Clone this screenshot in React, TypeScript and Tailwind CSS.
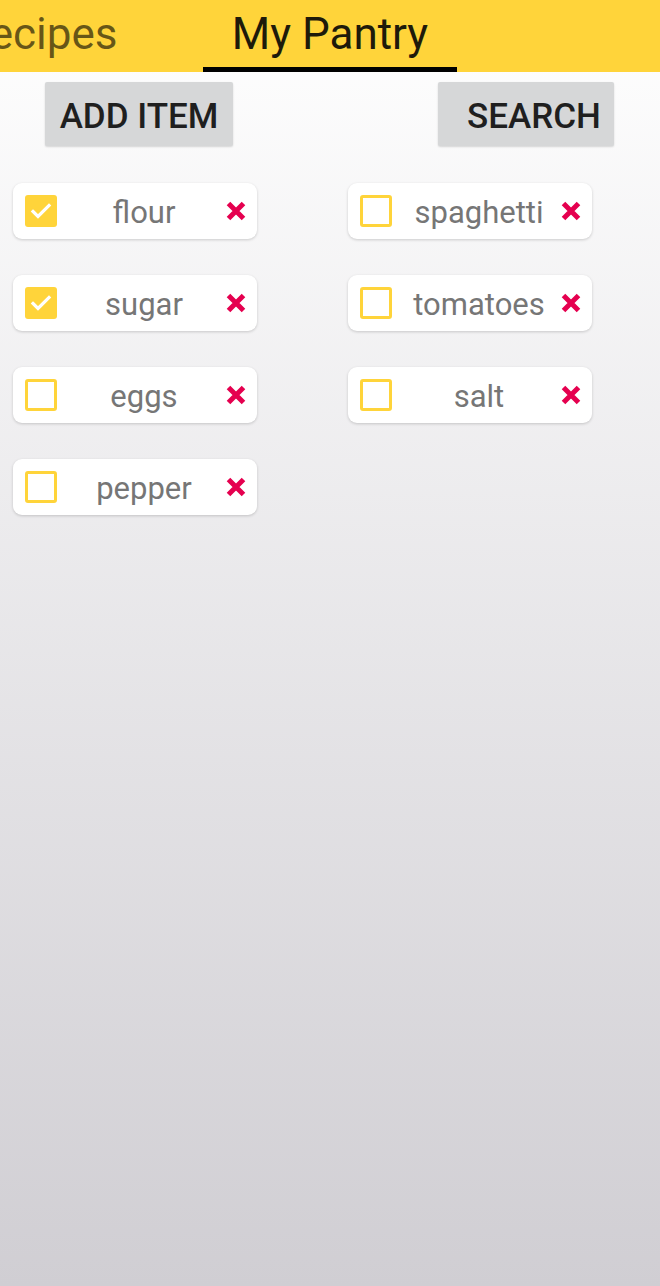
import React from "react";

type Item = { name: string; checked: boolean };

const left: Item[] = [
  { name: "flour", checked: true },
  { name: "sugar", checked: true },
  { name: "eggs", checked: false },
  { name: "pepper", checked: false },
];

const right: Item[] = [
  { name: "spaghetti", checked: false },
  { name: "tomatoes", checked: false },
  { name: "salt", checked: false },
];

function Checkbox({ checked }: { checked: boolean }) {
  if (checked) {
    return (
      <div className="w-[32px] h-[32px] rounded-[3px] bg-[#ffd43a] flex items-center justify-center shrink-0">
        <svg width="24" height="24" viewBox="0 0 24 24" fill="none">
          <path d="M4 12.5l5 5L20 6.5" stroke="#fff" strokeWidth="3.2" strokeLinecap="square" />
        </svg>
      </div>
    );
  }
  return <div className="w-[32px] h-[32px] rounded-[3px] border-[3px] border-[#ffd43a] bg-white shrink-0" />;
}

function RemoveIcon() {
  return (
    <svg width="22" height="22" viewBox="0 0 22 22" className="shrink-0">
      <path d="M3.5 3.5l15 15M18.5 3.5l-15 15" stroke="#e5004f" strokeWidth="5" strokeLinecap="butt" />
    </svg>
  );
}

function PantryCard({ item }: { item: Item }) {
  return (
    <div className="w-[244px] h-[56px] bg-white rounded-[9px] shadow-[0_1px_3px_rgba(0,0,0,0.18)] flex items-center pl-[12px] pr-[10px]">
      <Checkbox checked={item.checked} />
      <span className="flex-1 text-center text-[31px] leading-none text-[#767676] mt-[3px] pl-[6px] whitespace-nowrap">{item.name}</span>
      <RemoveIcon />
    </div>
  );
}

export default function App() {
  return (
    <div className="min-h-screen flex flex-col font-['Roboto',sans-serif] bg-linear-to-b from-white to-[#d0ced3]">
      <header className="h-[72px] bg-[#ffd43a] flex overflow-hidden shrink-0">
        <div className="w-[254px] ml-[-87px] shrink-0 text-center text-[44px] leading-none pt-[12px] text-black/60">Recipes</div>
        <div className="w-[254px] ml-[36px] shrink-0 flex flex-col">
          <div className="flex-1 text-center text-[44px] leading-none pt-[12px] text-[#1e1a0a]">My Pantry</div>
          <div className="h-[5px] bg-black" />
        </div>
      </header>

      <div className="flex mt-[10px]">
        <button className="ml-[45px] w-[188px] h-[64px] bg-[#d6d7d8] rounded-[2px] shadow-[0_1px_2px_rgba(0,0,0,0.15)] text-[35px] font-medium leading-none text-[#1f1f1f] pt-[4px]">
          ADD ITEM
        </button>
        <button className="ml-[205px] w-[176px] h-[64px] bg-[#d6d7d8] rounded-[2px] shadow-[0_1px_2px_rgba(0,0,0,0.15)] text-[35px] font-medium leading-none text-[#1f1f1f] pt-[4px] pl-[29px] pr-[15px] text-left">
          SEARCH
        </button>
      </div>

      <div className="grid grid-cols-[244px_244px] gap-x-[91px] gap-y-[36px] pl-[13px] mt-[37px]">
        {[0, 1, 2, 3].map((i) => (
          <React.Fragment key={i}>
            {left[i] ? <PantryCard item={left[i]} /> : <div />}
            {right[i] ? <PantryCard item={right[i]} /> : <div />}
          </React.Fragment>
        ))}
      </div>
    </div>
  );
}
